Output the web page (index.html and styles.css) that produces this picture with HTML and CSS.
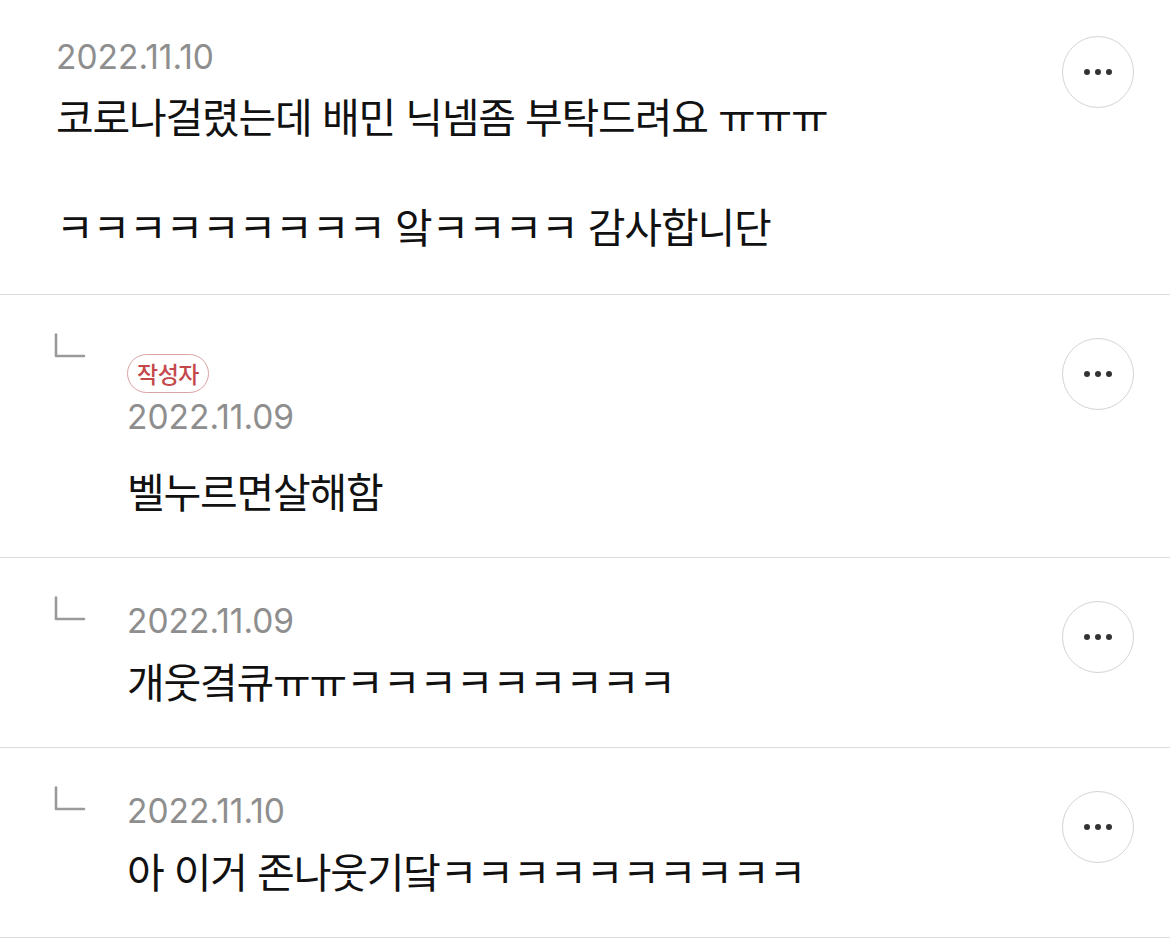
FILE: index.html
```html
<!DOCTYPE html>
<html lang="ko">
<head>
<meta charset="utf-8">
<link rel="stylesheet" href="styles.css">
</head>
<body>
<div class="list">
  <div class="comment first">
    <div class="content">
      <div class="date">2022.11.10</div>
      <div class="text">코로나걸렸는데 배민 닉넴좀 부탁드려요 ㅠㅠㅠ<br><br>ㅋㅋㅋㅋㅋㅋㅋㅋㅋ 앜ㅋㅋㅋㅋ 감사합니단</div>
    </div>
    <button class="more"><span></span><span></span><span></span></button>
  </div>
  <div class="comment reply">
    <svg class="reply-icon" width="32" height="26" viewBox="0 0 32 26"><path d="M2 1.5 V23 H30" fill="none" stroke="#9a9a9a" stroke-width="2.6" stroke-linecap="round" stroke-linejoin="round"/></svg>
    <div class="content">
      <span class="badge">작성자</span>
      <div class="date">2022.11.09</div>
      <div class="text spaced">벨누르면살해함</div>
    </div>
    <button class="more"><span></span><span></span><span></span></button>
  </div>
  <div class="comment reply">
    <svg class="reply-icon" width="32" height="26" viewBox="0 0 32 26"><path d="M2 1.5 V23 H30" fill="none" stroke="#9a9a9a" stroke-width="2.6" stroke-linecap="round" stroke-linejoin="round"/></svg>
    <div class="content">
      <div class="date">2022.11.09</div>
      <div class="text">개웃&#xACC0;큐ㅠㅠㅋㅋㅋㅋㅋㅋㅋㅋㅋ</div>
    </div>
    <button class="more"><span></span><span></span><span></span></button>
  </div>
  <div class="comment reply">
    <svg class="reply-icon" width="32" height="26" viewBox="0 0 32 26"><path d="M2 1.5 V23 H30" fill="none" stroke="#9a9a9a" stroke-width="2.6" stroke-linecap="round" stroke-linejoin="round"/></svg>
    <div class="content">
      <div class="date">2022.11.10</div>
      <div class="text">아 이거 존나웃기닼ㅋㅋㅋㅋㅋㅋㅋㅋㅋㅋ</div>
    </div>
    <button class="more"><span></span><span></span><span></span></button>
  </div>
</div>
</body>
</html>
```
FILE: styles.css
```css
html, body {
  margin: 0;
  padding: 0;
  background: #fff;
}
body {
  font-family: "Noto Sans CJK KR", "Noto Sans", sans-serif;
  color: #111;
}
.list {
  display: flex;
  flex-direction: column;
}
.comment {
  display: flex;
  align-items: flex-start;
  padding: 41px 36px 39px 54px;
  border-bottom: 1.5px solid #dcdcdc;
}
.comment.first {
  padding: 35px 36px 41px 56px;
}
.reply-icon {
  flex: none;
  margin-right: 41px;
  margin-top: -3px;
}
.content {
  flex: 1;
  display: flex;
  flex-direction: column;
  align-items: flex-start;
}
.date {
  font-family: Inter, "Noto Sans", sans-serif;
  font-size: 33.5px;
  line-height: 44px;
  color: #8e8e8e;
  margin-bottom: 10px;
}
.first .date {
  margin-bottom: 9px;
}
.text {
  font-size: 41px;
  letter-spacing: -1.2px;
  line-height: 55px;
  color: #111;
}
.text.spaced {
  margin-top: 14px;
}
.badge {
  font-size: 23px;
  font-weight: 500;
  letter-spacing: -0.5px;
  line-height: 37px;
  color: #c4484b;
  border: 1.5px solid #dca3a4;
  border-radius: 21px;
  padding: 0 9px;
  margin-top: 18px;
  margin-bottom: 2px;
}
.more {
  flex: none;
  width: 72px;
  height: 72px;
  margin-top: 2px;
  border: 1.5px solid #d4d4d4;
  border-radius: 50%;
  background: #fff;
  display: flex;
  align-items: center;
  justify-content: center;
  gap: 5px;
  padding: 0;
}
.first .more {
  margin-top: 1px;
}
.more span {
  width: 6px;
  height: 6px;
  border-radius: 50%;
  background: #333;
}
```
